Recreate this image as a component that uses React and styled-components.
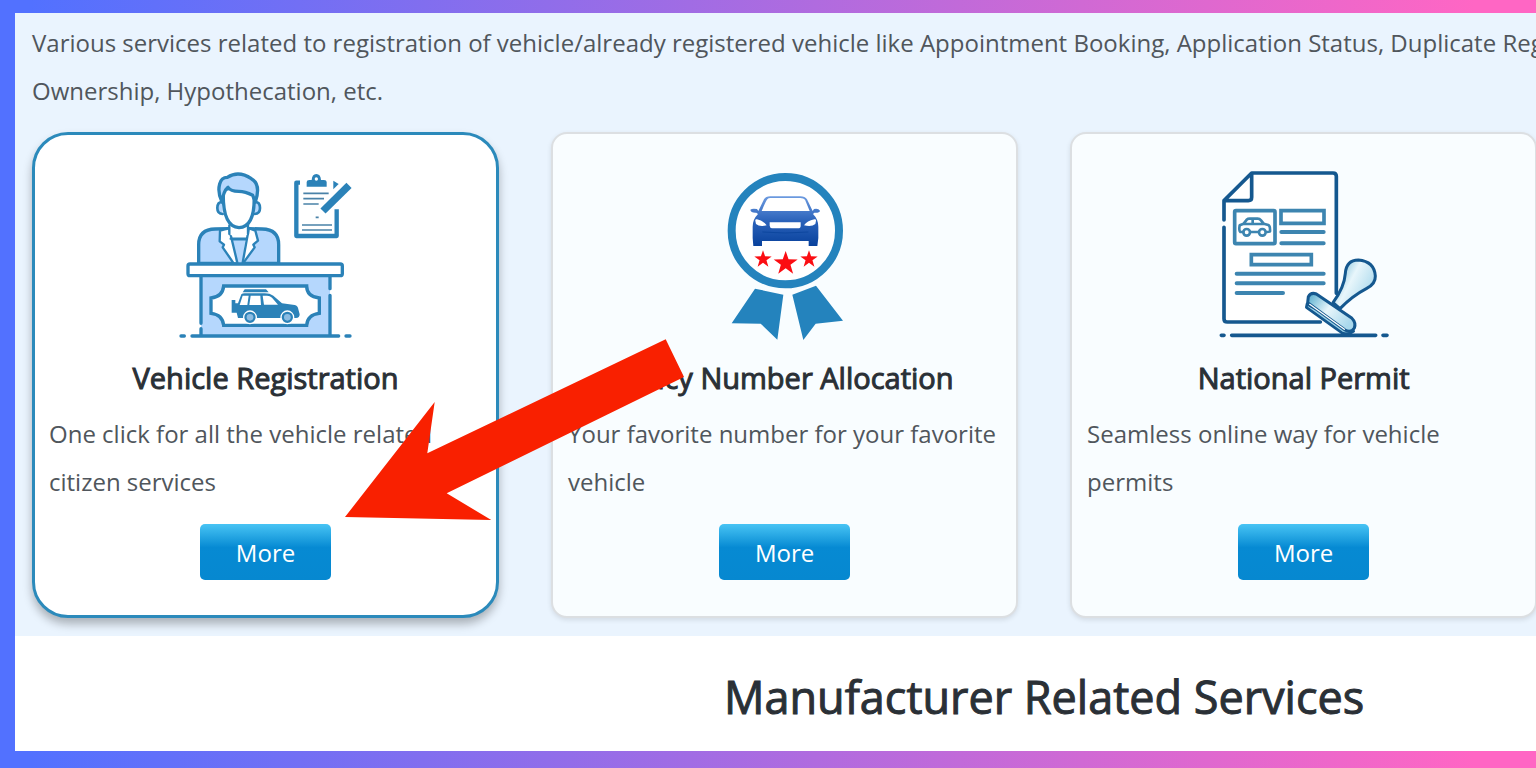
import React from 'react';
import styled, { createGlobalStyle } from 'styled-components';

const colors = {
  section: '#eaf4fe',
  card: '#f9fdff',
  active: '#2b8abb',
  line: '#2b82b8',
  fill: '#b5d7fd',
  ink: '#15588f',
  steel: '#3d85b0',
  text: '#50565c',
  heading: '#2a3036',
};

const GlobalStyle = createGlobalStyle`
  * {
    box-sizing: border-box;
  }
  body {
    margin: 0;
    font-family: 'Open Sans', 'Noto Sans', sans-serif;
    font-size: 24px;
    line-height: 48px;
    color: ${colors.text};
  }
`;

const Frame = styled.div`
  min-height: 100vh;
  padding: 13px 0 17px 15px;
  overflow: hidden;
  background: linear-gradient(90deg, #5271ff 2%, #ff66c4 96%);
`;

// the services page runs past the right side of the frame
const Page = styled.main`
  width: 134vw;
  background: white;
`;

const Services = styled.section`
  padding: 6px 17px 18px;
  background: ${colors.section};
`;

const Intro = styled.p`
  margin: 0 0 17px;
  white-space: nowrap;
`;

const CardGrid = styled.div`
  position: relative;
  display: grid;
  grid-template-columns: repeat(4, 1fr);
  gap: 52px;
`;

const Card = styled.article`
  display: flex;
  flex-direction: column;
  align-items: center;
  padding: ${(p) => (p.$active ? '14px 14px 35px' : '15px 15px 36px')};
  border: ${(p) => (p.$active ? `3px solid ${colors.active}` : '2px solid #dcdfe2')};
  border-radius: ${(p) => (p.$active ? 36 : 16)}px;
  background: ${(p) => (p.$active ? 'white' : colors.card)};
  box-shadow: ${(p) =>
    p.$active ? '0 6px 10px rgba(0, 0, 0, 0.28)' : '0 2px 5px rgba(0, 0, 0, 0.1)'};
`;

const Picture = styled.svg`
  width: 220px;
  height: 205px;
`;

const CardTitle = styled.h3`
  margin: 0 0 8px;
  font-size: 29px;
  font-weight: 400;
  line-height: 48px;
  color: ${colors.heading};
  -webkit-text-stroke: 1px ${colors.heading};
`;

const CardText = styled.p`
  align-self: stretch;
  margin: 0 0 18px;
`;

const MoreButton = styled.button`
  width: 131px;
  height: 56px;
  padding: 2px 0 0;
  border: 0;
  border-radius: 5px;
  background: linear-gradient(#48c4f4, #068ad3 42%, #0688d0);
  color: white;
  font: inherit;
  cursor: pointer;
`;

const SectionHeading = styled.h2`
  margin: 0;
  padding: 27px 24px 21px;
  font-size: 45px;
  font-weight: 400;
  line-height: 67px;
  text-align: center;
  color: ${colors.heading};
  -webkit-text-stroke: 1px ${colors.heading};
`;

const Pointer = styled.svg`
  position: absolute;
  top: 198px;
  left: 308px;
  width: 360px;
  height: 200px;
  pointer-events: none;
`;

const DeskPicture = () => (
  <Picture viewBox="-40 -33 660 615" aria-hidden="true">
    <g fill="none" stroke={colors.line} strokeWidth="10" strokeLinecap="round" strokeLinejoin="round">
      {/* clerk */}
      <path fill={colors.fill} d="M88 310V254Q88 208 138 207L178 206H240L278 207Q328 208 328 254V310Z" />
      <path fill="white" strokeWidth="7" d="M180 205 166 208 152 212 151 244 164 254 160 262 193 310H221L256 262 252 254 266 242 258 212 240 205Z" />
      <path fill={colors.fill} stroke="none" d="M190 238H228L220 310H200Z" />
      <path strokeWidth="7" d="M180 208 204 308M238 208 220 308M190 238H230" />
      <path fill="white" d="M180 186V222Q208 244 236 222V186" stroke="none" />
      <path strokeWidth="7" d="M180 196V222M236 196V222M184 236H232" />
      <path fill={colors.fill} strokeWidth="8" d="M158 126Q144 126 144 144T160 162M258 126Q272 126 272 144T256 162" />
      <path fill="white" d="M162 90Q158 200 209 203 260 200 254 96L210 78Z" />
      <path fill={colors.fill} d="M158 126Q144 98 151 72 156 52 174 52 208 30 246 56 276 72 258 126L250 106Q228 94 208 94 184 94 176 82 162 94 158 126Z" />
      {/* desk */}
      <path fill={colors.fill} stroke="none" d="M95 348H482V525H95Z" />
      <path d="M95 350V490M95 506V526M482 350V386M482 406V526" />
      <rect x="56" y="312" width="463" height="35" rx="6" fill="white" />
      <path fill="white" strokeLinejoin="miter" d="M163 378H412Q412 410 450 414V460Q414 464 412 496H163Q160 464 125 460V414Q160 410 163 378Z" />
      <path d="M35 528H45M68 528H508M530 528H542" />
    </g>
    {/* vehicle on the desk front */}
    <g fill={colors.line}>
      <path d="M226 388H290L298 397H220Z" />
      <path d="M187 420H198V430H206L216 403Q219 400 226 400H286Q302 400 312 407L338 430 376 435Q386 437 387 448L391 463Q391 474 380 474H206L202 458H187Z" />
      <path fill="white" d="M220 407H238L234 435H211ZM244 407H273L275 435H240ZM280 407H293Q302 407 308 413L326 434H284Z" />
      <g fill="#8cbce2" stroke="white" strokeWidth="4">
        <circle cx="242" cy="472" r="19" fill={colors.line} />
        <circle cx="354" cy="472" r="19" fill={colors.line} />
        <circle cx="242" cy="472" r="10" stroke="none" />
        <circle cx="354" cy="472" r="10" stroke="none" />
      </g>
    </g>
    {/* clipboard */}
    <g fill="none" stroke={colors.line} strokeLinejoin="round">
      <path strokeWidth="13" d="M392 68H381V228H502V148" />
      <path fill={colors.line} stroke="none" d="M492 62 508 72 492 88Z" />
      <path fill={colors.line} stroke="none" d="M412 80V66Q412 60 420 60H427Q428 42 441 42T455 60H464Q472 60 472 66V80Z" />
      <circle cx="441" cy="57" r="5" fill="white" stroke="none" />
      <path stroke="#4a82a8" strokeWidth="5" d="M402 100H478M402 116H464M402 132H448M398 195H488M398 210H488M439 172H448" />
      <path stroke="white" strokeWidth="34" d="M468 146 530 86" />
      <path strokeWidth="22" d="M461 153 539 76" />
    </g>
  </Picture>
);

const Star = ({ x, y, size }) => (
  <path
    fill="#fb0d12"
    transform={`translate(${x} ${y}) scale(${size})`}
    d="M0-10 2.4-3.2 10-3 4 1.4 6.2 9 0 4.4-6.2 9-4 1.4-10-3-2.4-3.2Z"
  />
);

const BadgePicture = () => (
  <Picture viewBox="-74 -33 660 615" aria-hidden="true">
    <defs>
      <linearGradient id="badgeCar" x1="0" y1="0" x2="0" y2="1">
        <stop offset="0" stopColor="#6d9be0" />
        <stop offset="0.5" stopColor="#2a62ba" />
        <stop offset="1" stopColor="#08419c" />
      </linearGradient>
    </defs>
    <circle cx="257" cy="212" r="161" fill="white" stroke="#2483bd" strokeWidth="24" />
    <path fill="#2483bd" d="M166 386 251 404 233 539 183 491 96 490ZM349 377 430 482 348 491 311 540 278 404Z" />
    <path
      fill="url(#badgeCar)"
      fillRule="evenodd"
      d="M152 149Q158 144 172 147L176 153 193 118Q198 109 212 109H302Q316 109 322 118L339 153 343 147Q356 144 361 152 360 159 344 158L340 162Q356 178 356 200V234L353 258H327V243H187V258H161L159 234V200Q159 178 175 162L170 158Q153 159 152 149ZM203 118Q200 120 186 153H330L316 119Q312 114 302 114H212Q206 114 203 118Z"
    />
    <path fill="white" d="M167 182Q166 177 172 178 192 183 201 196 180 202 169 192ZM349 182Q350 177 344 178 322 183 313 196 336 202 347 192ZM210 187H303V197Q303 205 295 205H218Q211 205 210 197Z" />
    <path fill="none" stroke="#0d479f" strokeWidth="3" d="M188 216Q257 222 326 216" />
    <Star x={190} y={297} size={2.6} />
    <Star x={258} y={309} size={3.6} />
    <Star x={328} y={297} size={2.6} />
  </Picture>
);

const PermitPicture = () => (
  <Picture viewBox="-17 -33 660 615" aria-hidden="true">
    <defs>
      <linearGradient id="stamp" x1="0" y1="0" x2="1" y2="0.6">
        <stop offset="0" stopColor="#4fa9cb" />
        <stop offset="0.5" stopColor="#e8f6fb" />
        <stop offset="1" stopColor="#a9d8ec" />
      </linearGradient>
    </defs>
    <g fill="none" stroke={colors.ink} strokeWidth="11" strokeLinecap="round" strokeLinejoin="round">
      <path fill="white" stroke="none" d="M73 122 156 39H410V486H73Z" />
      <path d="M73 180V122L156 39H400Q410 39 410 49V400M73 202V476Q73 486 83 486H362M156 39V112Q156 122 146 122H73" />
      <path d="M65 526H73M96 526H528M550 526H562" />
      <g stroke={colors.steel}>
        <rect x="105" y="152" width="121" height="99" rx="4" />
        <path strokeLinejoin="miter" d="M244 152H373V190H244ZM155 284H335V314H155Z" />
        <path strokeWidth="12" d="M245 216H372M245 250H372M111 341H372M111 370H372M111 399H250" />
        <path strokeWidth="8" d="M131 216H122Q117 212 120 196L132 191 142 178Q144 176 150 176H174Q180 176 184 181L192 191 206 195Q212 198 211 214L202 216M152 216H176M133 192H192M159 177V191" />
        <circle cx="141" cy="217" r="10" strokeWidth="8" />
        <circle cx="188" cy="217" r="10" strokeWidth="8" />
      </g>
      {/* rubber stamp */}
      <path fill="url(#stamp)" strokeWidth="9" d="M400 428Q434 382 437 340 440 300 476 300 524 304 527 348 528 372 500 386 458 408 421 446Z" />
      <path fill="#9dd2e7" strokeWidth="8" d="M322 432 320 442 426 518Q448 526 462 514L456 506Z" />
      <path fill="url(#stamp)" strokeWidth="9" d="M326 410Q334 396 350 402L456 474Q470 488 464 504 454 520 436 510L324 428Z" />
      <path stroke="white" strokeWidth="4" d="M330 433 434 508" />
    </g>
  </Picture>
);

const services = [
  {
    title: 'Vehicle Registration',
    text: 'One click for all the vehicle related citizen services',
    icon: DeskPicture,
    active: true,
  },
  {
    title: 'Fancy Number Allocation',
    text: 'Your favorite number for your favorite vehicle',
    icon: BadgePicture,
  },
  {
    title: 'National Permit',
    text: 'Seamless online way for vehicle permits',
    icon: PermitPicture,
  },
];

function ServiceCard({ title, text, icon: Icon, active }) {
  return (
    <Card $active={active}>
      <Icon />
      <CardTitle>{title}</CardTitle>
      <CardText>{text}</CardText>
      <MoreButton type="button" aria-label={`More: ${title}`}>More</MoreButton>
    </Card>
  );
}

function App() {
  return (
    <Frame>
      <GlobalStyle />
      <Page>
        <Services>
          <Intro>
            Various services related to registration of vehicle/already registered vehicle like
            Appointment Booking, Application Status, Duplicate Registration Certificate, Transfer of
            <br />
            Ownership, Hypothecation, etc.
          </Intro>
          <CardGrid>
            {services.map((service) => (
              <ServiceCard key={service.title} {...service} />
            ))}
            <Pointer viewBox="340 330 360 200" aria-hidden="true">
              <path fill="#f92000" d="M345 517 434.7 402 427.3 453.3 665.7 339.3 684 377 446.7 493.3 491.3 520Z" />
            </Pointer>
          </CardGrid>
        </Services>
        <SectionHeading>Manufacturer Related Services</SectionHeading>
      </Page>
    </Frame>
  );
}

export default App;
